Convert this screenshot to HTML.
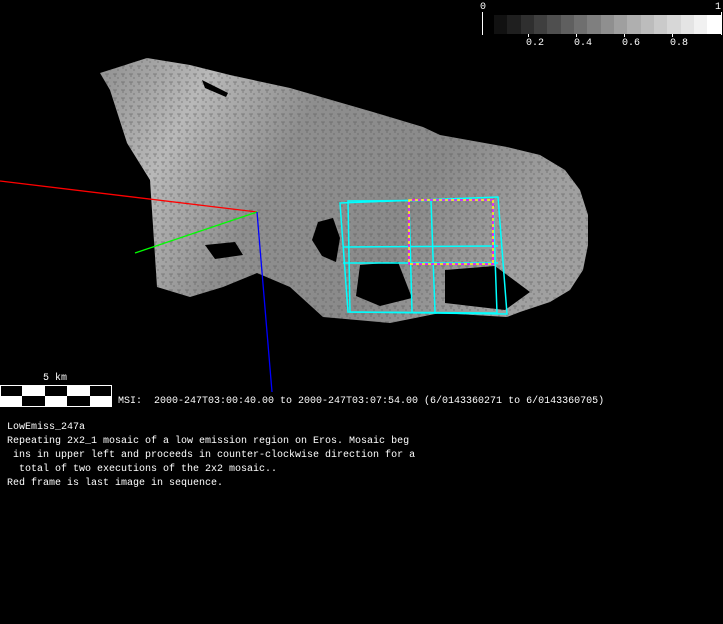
<!DOCTYPE html>
<html><head><style>
html,body{margin:0;padding:0;background:#000;}
body{width:723px;height:624px;position:relative;overflow:hidden;font-family:"Liberation Mono","DejaVu Sans Mono",monospace;color:#fff;}
.t{position:absolute;font-size:10px;line-height:10px;white-space:pre;}
</style></head><body>
<svg width="723" height="624" style="position:absolute;left:0;top:0">
<defs>
<linearGradient id="g" x1="0" y1="0" x2="1" y2="0.3">
<stop offset="0" stop-color="#909090"/>
<stop offset="0.22" stop-color="#b8b8b8"/>
<stop offset="0.45" stop-color="#8e8e8e"/>
<stop offset="0.75" stop-color="#8a8a8a"/>
<stop offset="1" stop-color="#a0a0a0"/>
</linearGradient>
<pattern id="p" width="8" height="8" patternUnits="userSpaceOnUse">
<path d="M1 2h4M3 2v3M5 6h2" stroke="#555" stroke-width="1"/>
</pattern>
</defs>
<g id="body">
<polygon fill="url(#g)" points="100,73 147,58 190,65 230,75 290,88 373,112 423,127 440,135 507,147 540,155 565,170 580,190 588,215 588,245 583,270 570,290 550,302 520,312 507,317 440,313 390,323 323,317 290,287 257,273 223,287 190,297 157,287 150,180 127,143 110,90"/>
<polygon fill="url(#p)" opacity="0.5" points="100,73 147,58 190,65 230,75 290,88 373,112 423,127 440,135 507,147 540,155 565,170 580,190 588,215 588,245 583,270 570,290 550,302 520,312 507,317 440,313 390,323 323,317 290,287 257,273 223,287 190,297 157,287 150,180 127,143 110,90"/>
</g>
<polygon fill="#000" points="318,222 333,218 340,238 336,262 322,256 312,240"/>
<polygon fill="#000" points="445,270 495,266 530,292 505,310 445,303"/>
<polygon fill="#000" points="360,265 398,262 412,298 380,306 356,296"/>
<polygon fill="#000" points="205,245 235,242 243,255 215,259"/>
<polygon fill="#000" points="202,80 228,93 226,97 205,88"/>
<g fill="none" stroke="#0ff" stroke-width="1.5">
<polygon points="340,203 498,197 507,314 348,312"/>
<polygon points="348,201 493,200 497,313 350,312"/>
<line x1="343" y1="247" x2="498" y2="246"/>
<line x1="343" y1="263" x2="498" y2="263"/>
<line x1="409" y1="201" x2="412" y2="312"/>
<line x1="431" y1="201" x2="435" y2="312"/>
</g>
<rect x="409" y="200" width="84" height="64" fill="none" stroke="#f0f" stroke-width="1.5"/>
<rect x="409" y="200" width="84" height="64" fill="none" stroke="#ff0" stroke-width="1.5" stroke-dasharray="3 3"/>
<line x1="0" y1="181" x2="257" y2="212" stroke="#f00" stroke-width="1.3"/>
<line x1="135" y1="253" x2="257" y2="212" stroke="#0f0" stroke-width="1.3"/>
<line x1="257" y1="212" x2="272" y2="392" stroke="#00f" stroke-width="1.3"/>
<line x1="482.5" y1="12" x2="482.5" y2="35" stroke="#fff"/>
<line x1="721.5" y1="12" x2="721.5" y2="35" stroke="#fff"/>
<g>
<rect x="494" y="15" width="14" height="19" fill="#111"/>
<rect x="507" y="15" width="14" height="19" fill="#1f1f1f"/>
<rect x="521" y="15" width="14" height="19" fill="#2f2f2f"/>
<rect x="534" y="15" width="14" height="19" fill="#3f3f3f"/>
<rect x="547" y="15" width="14" height="19" fill="#4f4f4f"/>
<rect x="561" y="15" width="14" height="19" fill="#5f5f5f"/>
<rect x="574" y="15" width="14" height="19" fill="#6f6f6f"/>
<rect x="587" y="15" width="14" height="19" fill="#7f7f7f"/>
<rect x="601" y="15" width="14" height="19" fill="#8f8f8f"/>
<rect x="614" y="15" width="14" height="19" fill="#9f9f9f"/>
<rect x="627" y="15" width="14" height="19" fill="#afafaf"/>
<rect x="641" y="15" width="14" height="19" fill="#bcbcbc"/>
<rect x="654" y="15" width="14" height="19" fill="#cacaca"/>
<rect x="667" y="15" width="14" height="19" fill="#d7d7d7"/>
<rect x="681" y="15" width="14" height="19" fill="#e4e4e4"/>
<rect x="694" y="15" width="14" height="19" fill="#f1f1f1"/>
<rect x="707" y="15" width="15" height="19" fill="#fff"/>
</g>
<g stroke="#fff"><line x1="528.5" y1="34" x2="528.5" y2="37"/><line x1="576.5" y1="34" x2="576.5" y2="37"/><line x1="624.5" y1="34" x2="624.5" y2="37"/><line x1="672.5" y1="34" x2="672.5" y2="37"/></g>
<rect x="0" y="385" width="112" height="22" fill="#fff"/>
<g fill="#000">
<rect x="1" y="386" width="21" height="10"/><rect x="45" y="386" width="22" height="10"/><rect x="90" y="386" width="21" height="10"/>
<rect x="22" y="396" width="23" height="10"/><rect x="67" y="396" width="23" height="10"/>
</g>
</svg>
<div class="t" style="left:480px;top:3px">0</div>
<div class="t" style="left:715px;top:3px">1</div>
<div class="t" style="left:526px;top:39px">0.2</div>
<div class="t" style="left:574px;top:39px">0.4</div>
<div class="t" style="left:622px;top:39px">0.6</div>
<div class="t" style="left:670px;top:39px">0.8</div>
<div class="t" style="left:43px;top:374px">5 km</div>
<div class="t" style="left:118px;top:397px">MSI:  2000-247T03:00:40.00 to 2000-247T03:07:54.00 (6/0143360271 to 6/0143360705)</div>
<div class="t" style="left:7px;top:421px;line-height:14px">LowEmiss_247a
Repeating 2x2_1 mosaic of a low emission region on Eros. Mosaic beg
 ins in upper left and proceeds in counter-clockwise direction for a
  total of two executions of the 2x2 mosaic..
Red frame is last image in sequence.</div>
</body></html>
